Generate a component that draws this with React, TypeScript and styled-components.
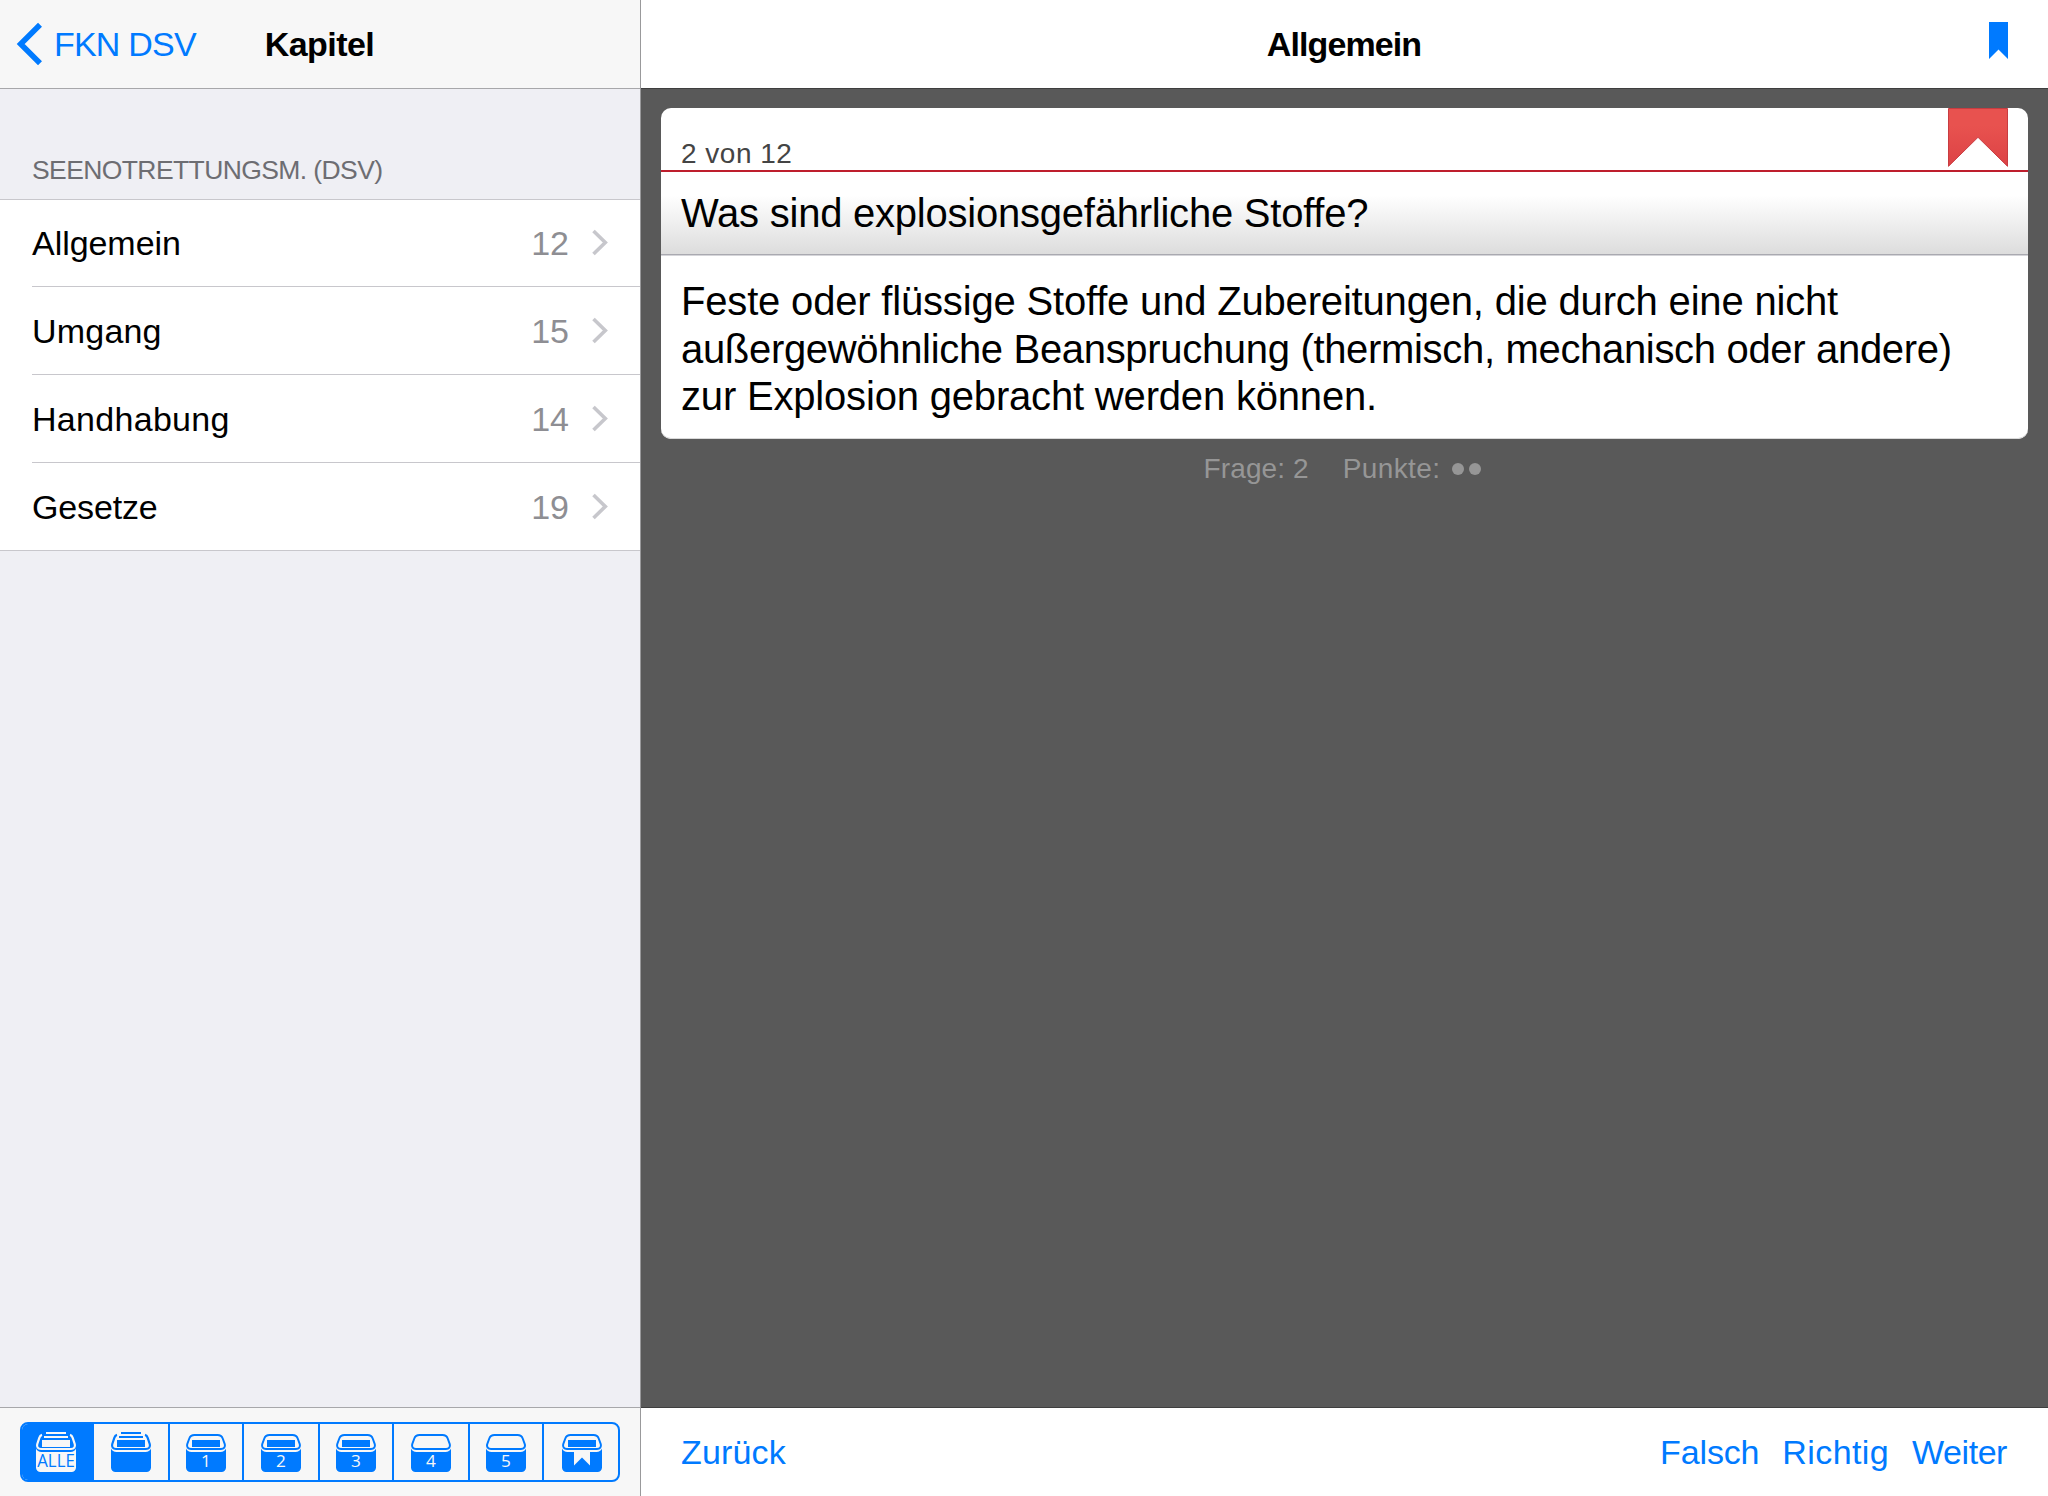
import React from 'react';
import styled, { createGlobalStyle } from 'styled-components';

const BLUE = '#007aff';

const GlobalStyle = createGlobalStyle`
  * { box-sizing: border-box; }
  body {
    margin: 0;
    background: #595959;
    font-family: "Liberation Sans", Arial, Helvetica, sans-serif;
    color: #000;
  }
  button { font: inherit; background: none; border: 0; padding: 0; color: inherit; cursor: pointer; }
`;

const Screen = styled.div`
  display: grid;
  grid-template-columns: 641px 1fr;
  width: 2048px;
  height: 1496px;
  overflow: hidden;
`;

const Sidebar = styled.aside`
  display: flex;
  flex-direction: column;
  background: #efeff4;
  border-right: 1px solid #99999b;
`;

const Main = styled.main`
  display: flex;
  flex-direction: column;
  background: #595959;
`;

const NavBar = styled.header<{ $tone: 'side' | 'main' }>`
  display: grid;
  grid-template-columns: 1fr auto 1fr;
  align-items: center;
  flex: none;
  height: 89px;
  background: ${(p) => (p.$tone === 'side' ? '#f7f7f7' : '#fff')};
  border-bottom: 1px solid ${(p) => (p.$tone === 'side' ? '#a7a7aa' : '#3e3e3e')};
`;

const Title = styled.h1<{ $spacing: number }>`
  margin: 0 1px 0 0;
  font-size: 34px;
  font-weight: 700;
  line-height: 40px;
  letter-spacing: ${(p) => p.$spacing}px;
`;

const BackButton = styled.button`
  display: flex;
  align-items: center;
  gap: 11px;
  margin-left: 16px;
  justify-self: start;
  color: ${BLUE};
  font-size: 34px;
  line-height: 40px;
  letter-spacing: -0.8px;
`;

const BookmarkButton = styled.button`
  display: flex;
  justify-self: end;
  margin: 0 40px 7px 0;
`;

const SectionHeader = styled.h2`
  display: flex;
  align-items: flex-end;
  flex: none;
  height: 110px;
  margin: 0;
  padding: 0 32px 14px;
  color: #6d6d72;
  font-size: 26.5px;
  font-weight: 400;
  line-height: 30px;
  letter-spacing: -0.6px;
`;

const ChapterList = styled.ul`
  margin: 0;
  padding: 0 0 0 32px;
  list-style: none;
  background: #fff;
  box-shadow: inset 0 1px #c8c7cc, inset 0 -1px #c8c7cc;
`;

const Chapter = styled.li<{ $spacing: number }>`
  display: flex;
  align-items: center;
  height: 88px;
  padding-right: 32px;
  border-bottom: 1px solid #c8c7cc;
  font-size: 34px;
  line-height: 40px;
  letter-spacing: ${(p) => p.$spacing}px;
`;

const Count = styled.span`
  margin: 0 23px 0 auto;
  color: #8e8e93;
  letter-spacing: 0;
`;

const SideToolbar = styled.footer`
  display: flex;
  flex: none;
  height: 89px;
  margin-top: auto;
  padding: 14px 20px 0;
  background: #f7f7f7;
  border-top: 1px solid #a7a7aa;
`;

const Segments = styled.div`
  display: flex;
  width: 600px;
  height: 60px;
  overflow: hidden;
  border: 2px solid ${BLUE};
  border-radius: 8px;
`;

const Segment = styled.button<{ $width: number; $active?: boolean; $shift: number }>`
  display: flex;
  align-items: flex-start;
  flex: none;
  width: ${(p) => p.$width}px;
  padding: 7px 0 0 ${(p) => p.$shift}px;
  background: ${(p) => (p.$active ? BLUE : 'transparent')};
  border-right: ${(p) => (p.$active ? '0' : `2px solid ${BLUE}`)};

  &:last-child { border-right: 0; }
`;

const Glyph = styled.svg`
  display: block;
  flex: none;
  overflow: visible;
`;

const Card = styled.article`
  flex: none;
  margin: 19px 20px 0;
  height: 331px;
  border-radius: 10px;
  overflow: hidden;
  background: #fff;
  box-shadow: inset 0 -1px #d9d9d9;
`;

const CardTop = styled.div`
  display: flex;
  justify-content: space-between;
  align-items: flex-start;
  height: 64px;
  padding: 0 20px 0 20px;
  border-bottom: 2px solid #be1e2d;
`;

const Progress = styled.span`
  align-self: flex-end;
  color: #444;
  font-size: 28px;
  line-height: 32px;
  letter-spacing: 0.5px;
`;

const Question = styled.div`
  display: flex;
  align-items: center;
  height: 84px;
  padding: 0 0 2px 20px;
  background: linear-gradient(#fff 0%, #fff 28%, #dcdcdc 100%);
  border-bottom: 1px solid #d5d5d9;
  box-shadow: inset 0 -1px #a9a9b0;
  font-size: 40px;
  line-height: 48px;
  letter-spacing: -0.23px;
`;

const Answer = styled.div`
  padding: 22px 19px 0 20px;
  font-size: 40px;
  line-height: 47.7px;
`;

const AnswerLine = styled.span<{ $spacing: number }>`
  display: block;
  white-space: nowrap;
  letter-spacing: ${(p) => p.$spacing}px;
`;

const Meta = styled.div`
  display: flex;
  justify-content: center;
  gap: 34px;
  padding-right: 4px;
  margin-top: 14px;
  color: #969696;
  font-size: 28px;
  line-height: 32px;
  letter-spacing: 0.1px;
`;

const Points = styled.span`
  display: flex;
  align-items: center;
  gap: 4.5px;
  letter-spacing: 0.4px;
`;

const PointsLabel = styled.span`
  margin-right: 7px;
`;

const Dot = styled.i`
  width: 12.5px;
  height: 12.5px;
  border-radius: 50%;
  background: #969696;
`;

const MainToolbar = styled.footer`
  display: flex;
  align-items: center;
  gap: 23px;
  flex: none;
  height: 89px;
  margin-top: auto;
  padding: 0 41px 0 40px;
  background: #fff;
  border-top: 1px solid #3e3e3e;
  color: ${BLUE};
`;

const ToolbarButton = styled.button<{ $spacing: number; $push?: boolean }>`
  margin-right: ${(p) => (p.$push ? 'auto' : '0')};
  font-size: 34px;
  line-height: 40px;
  letter-spacing: ${(p) => p.$spacing}px;
`;

type BoxKind = 'all' | 'stack' | 'full' | 'empty' | 'marked';

function BoxIcon({ kind, label, color, back }: { kind: BoxKind; label?: string; color: string; back: string }) {
  const open = kind === 'all' || kind === 'stack';
  return (
    <Glyph width="40" height="41" viewBox="0 0 40 41">
      {open ? (
        <>
          <path d="M10 1h20v2H10zM8 5h24v2H8z" fill={color} />
          <path
            d="M6 3.9C4.6 4.3 3.8 5.2 3.3 6.8L1.2 13.2C.5 16 2 18 5 18h30c3 0 4.5-2 3.8-4.8L36.7 6.8C36.2 5.2 35.4 4.3 34 3.9"
            fill="none"
            stroke={color}
            strokeWidth="2.2"
          />
        </>
      ) : (
        <path
          d="M8.5 4h23c2.6 0 4.300 1 5.200 3.500L38.800 13.200C39.500 16 38 18 35 18H5c-3 0-4.500-2-3.800-4.800L3.300 7.500C4.200 5 5.900 4 8.500 4z"
          fill="none"
          stroke={color}
          strokeWidth="2"
        />
      )}
      {kind !== 'empty' && <path d="M6 9h28v7H6z" fill={color} />}
      <path
        d="M0 17.500C1 19.800 2.800 21 5.500 21h29c2.700 0 4.500-1.200 5.500-3.500V36.500a4.500 4.500 0 0 1-4.500 4.500h-31A4.500 4.500 0 0 1 0 36.500z"
        fill={color}
      />
      {kind === 'marked' && <path d="M12 20.500h16V34.500l-8-8-8 8z" fill={back} />}
      {label && (
        <text
          x="20"
          y="36"
          textAnchor="middle"
          fontFamily='"Open Sans", "Noto Sans", sans-serif'
          fontSize={kind === 'all' ? 18.5 : 17.2}
          fill={back}
          textLength={kind === 'all' ? 37.5 : undefined}
          lengthAdjust="spacingAndGlyphs"
        >
          {label}
        </text>
      )}
    </Glyph>
  );
}

const chapters = [
  { name: 'Allgemein', count: 12, spacing: -0.05 },
  { name: 'Umgang', count: 15, spacing: 0.2 },
  { name: 'Handhabung', count: 14, spacing: 0.3 },
  { name: 'Gesetze', count: 19, spacing: -0.15 },
];

const boxes: { kind: BoxKind; label?: string; width: number; shift: number }[] = [
  { kind: 'all', label: 'ALLE', width: 72, shift: 14 },
  { kind: 'stack', width: 76, shift: 17 },
  { kind: 'full', label: '1', width: 74, shift: 16 },
  { kind: 'full', label: '2', width: 76, shift: 17 },
  { kind: 'full', label: '3', width: 74, shift: 16 },
  { kind: 'empty', label: '4', width: 76, shift: 17 },
  { kind: 'empty', label: '5', width: 74, shift: 16 },
  { kind: 'marked', width: 74, shift: 18 },
];

const answer = [
  { text: 'Feste oder flüssige Stoffe und Zubereitungen, die durch eine nicht', spacing: -0.18 },
  { text: 'außergewöhnliche Beanspruchung (thermisch, mechanisch oder andere)', spacing: -0.32 },
  { text: 'zur Explosion gebracht werden können.', spacing: -0.18 },
];

export default function App() {
  return (
    <>
      <GlobalStyle />
      <Screen>
        <Sidebar>
          <NavBar $tone="side">
            <BackButton>
              <Glyph width="27" height="44" viewBox="0 0 27 44">
                <path d="M24 2.700 4.700 22 24 41.300" fill="none" stroke={BLUE} strokeWidth="5.600" />
              </Glyph>
              FKN DSV
            </BackButton>
            <Title $spacing={-0.55}>Kapitel</Title>
          </NavBar>
          <SectionHeader>SEENOTRETTUNGSM. (DSV)</SectionHeader>
          <ChapterList>
            {chapters.map((c) => (
              <Chapter key={c.name} $spacing={c.spacing}>
                {c.name}
                <Count>{c.count}</Count>
                <Glyph width="16" height="26" viewBox="0 0 16 26">
                  <path d="M1.500 1 13.300 12.500 1.500 24" fill="none" stroke="#c7c7cc" strokeWidth="3.600" />
                </Glyph>
              </Chapter>
            ))}
          </ChapterList>
          <SideToolbar>
            <Segments>
              {boxes.map((b, i) => (
                <Segment key={i} $width={b.width} $shift={b.shift} $active={i === 0}>
                  <BoxIcon
                    kind={b.kind}
                    label={b.label}
                    color={i === 0 ? '#f7f7f7' : BLUE}
                    back={i === 0 ? BLUE : '#f7f7f7'}
                  />
                </Segment>
              ))}
            </Segments>
          </SideToolbar>
        </Sidebar>
        <Main>
          <NavBar $tone="main">
            <span />
            <Title $spacing={-0.9}>Allgemein</Title>
            <BookmarkButton aria-label="Bookmark">
              <Glyph width="19" height="37" viewBox="0 0 19 37">
                <path d="M0 0h19v37l-9.500-9.500L0 37z" fill={BLUE} />
              </Glyph>
            </BookmarkButton>
          </NavBar>
          <Card>
            <CardTop>
              <Progress>2 von 12</Progress>
              <Glyph width="60" height="60" viewBox="0 0 60 60">
                <defs>
                  <linearGradient id="ribbon" x1="0" y1="0" x2="0" y2="1">
                    <stop offset="0.300" stopColor="#e8524f" />
                    <stop offset="1" stopColor="#dc4245" />
                  </linearGradient>
                </defs>
                <path d="M.5.5h59v57.800L30 29.300.5 58.300z" fill="url(#ribbon)" stroke="#c83c41" />
              </Glyph>
            </CardTop>
            <Question>Was sind explosionsgefährliche Stoffe?</Question>
            <Answer>
              {answer.map((l) => (
                <AnswerLine key={l.text} $spacing={l.spacing}>{l.text}</AnswerLine>
              ))}
            </Answer>
          </Card>
          <Meta>
            <span>Frage: 2</span>
            <Points>
              <PointsLabel>Punkte:</PointsLabel>
              <Dot />
              <Dot />
            </Points>
          </Meta>
          <MainToolbar>
            <ToolbarButton $spacing={0.15} $push>Zurück</ToolbarButton>
            <ToolbarButton $spacing={-0.15}>Falsch</ToolbarButton>
            <ToolbarButton $spacing={0.4}>Richtig</ToolbarButton>
            <ToolbarButton $spacing={-0.45}>Weiter</ToolbarButton>
          </MainToolbar>
        </Main>
      </Screen>
    </>
  );
}
